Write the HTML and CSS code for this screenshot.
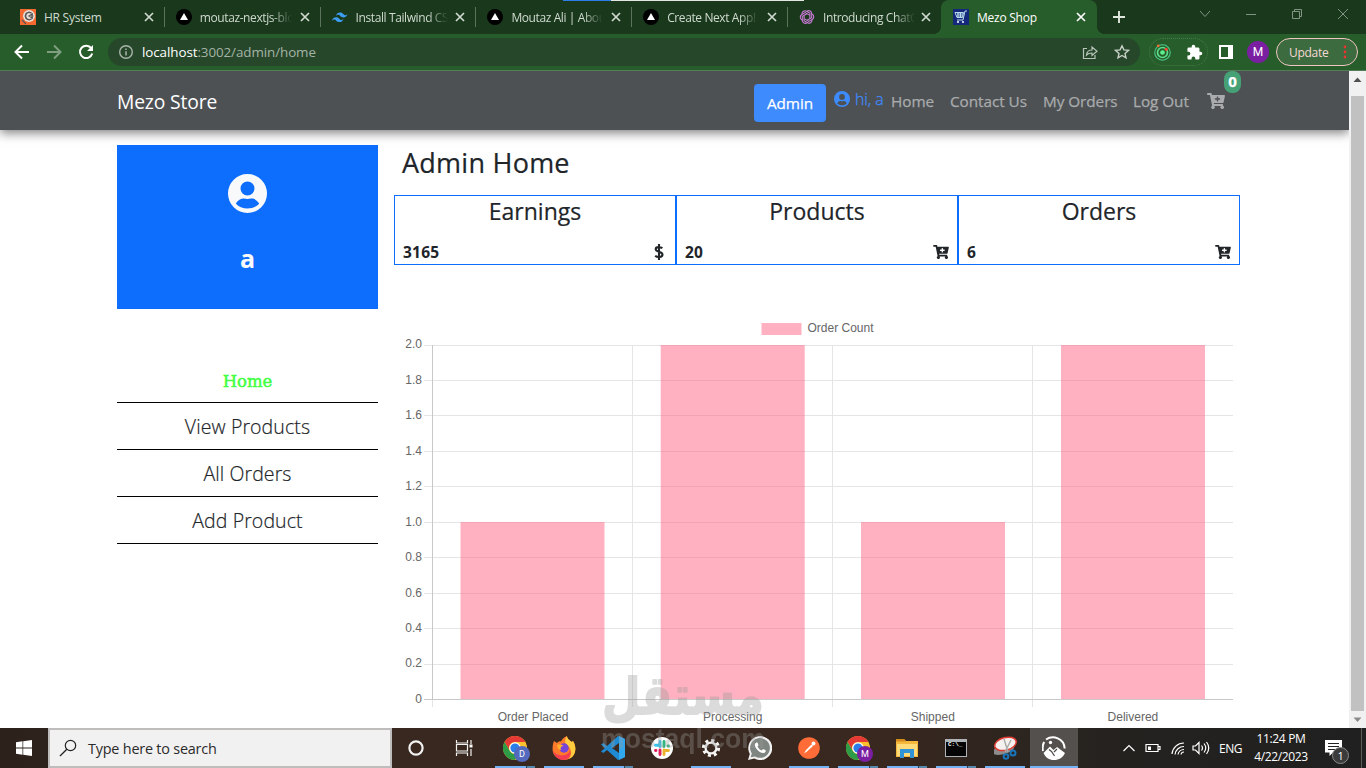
FILE: index.html
```html
<!DOCTYPE html>
<html lang="en">

<head>
    <meta charset="UTF-8">
    <meta name="viewport" content="width=device-width, initial-scale=1.0">
    <title>Mezo Shop</title>
    <link rel="stylesheet" href="styles.css">
</head>

<body>
    <!-- shared icons -->
    <svg class="sprite" width="0" height="0">
        <symbol id="close" viewBox="0 0 12 12"><path d="M2 2l8 8M10 2l-8 8" fill="none" stroke="currentColor" stroke-width="1.7"/></symbol>
        <symbol id="vercel" viewBox="0 0 16 16"><circle cx="8" cy="8" r="8" fill="#000"/><path d="M8 4l4 7H4z" fill="#fff"/></symbol>
        <symbol id="user" viewBox="0 0 24 24"><path fill="currentColor" fill-rule="evenodd" d="M12 0a12 12 0 1 0 0 24 12 12 0 0 0 0-24zm0 4.600a4.300 4.300 0 1 1 0 8.600 4.300 4.300 0 0 1 0-8.600zM4.800 18.200c1.500-2.300 3.200-3.200 5-3.100 1.500.4 2.900.4 4.400 0 1.800-.1 3.500.8 5 3.100-3.300 4.100-11.100 4.100-14.400 0z"/></symbol>
        <symbol id="cart" viewBox="0 0 576 512"><path fill="currentColor" fill-rule="evenodd" d="M505 319H218l6 33h269c15 0 27 14 23 29l-5 25a56 56 0 1 1-64 10H231a56 56 0 1 1-67-9L93 64H24C11 64 0 53 0 40V24C0 11 11 0 24 0h102c11 0 21 8 23 19l9 45h394c15 0 27 14 23 29l-47 208c-2 11-12 18-23 18zM408 168h-48v-40c0-9-7-16-16-16h-16c-9 0-16 7-16 16v40h-48c-9 0-16 7-16 16v16c0 9 7 16 16 16h48v40c0 9 7 16 16 16h16c9 0 16-7 16-16v-40h48c9 0 16-7 16-16v-16c0-9-7-16-16-16z"/></symbol>
        <symbol id="chrome" viewBox="0 0 24 24">
            <circle cx="12" cy="12" r="12" fill="#fbc02d"/>
            <path d="M1.6 6A12 12 0 0 1 22.4 6H12a6 6 0 0 0-5.2 9z" fill="#e53935"/>
            <path d="M1.6 6A12 12 0 0 0 12 24l5.2-9a6 6 0 0 1-10.4 0z" fill="#2e9b47"/>
            <circle cx="12" cy="12" r="5.8" fill="#fff"/><circle cx="12" cy="12" r="4.6" fill="#2b7de9"/>
        </symbol>
    </svg>

    <header class="browser">
        <div class="strip-accent"><span></span></div>
        <div class="tab-strip">
            <div class="tab">
                <svg class="favicon" viewBox="0 0 16 16"><rect width="16" height="16" fill="#f4692f"/><circle cx="9" cy="7" r="6" fill="#e9ddd5"/><circle cx="9" cy="7" r="4" fill="none" stroke="#777" stroke-width="1"/><path d="M11 4a3.500 3.500 0 1 0 0 6M9 7l3-2v4zM2 11l4 4" stroke="#555" fill="none" stroke-width="1.2"/></svg>
                <span class="tab-title">HR System</span><svg class="tab-close"><use href="#close"/></svg>
            </div>
            <div class="tab fade">
                <svg class="favicon"><use href="#vercel"/></svg>
                <span class="tab-title">moutaz-nextjs-blo</span><svg class="tab-close"><use href="#close"/></svg>
            </div>
            <div class="tab fade">
                <svg class="favicon" viewBox="0 0 16 16"><path d="M4 7c.6-2.300 2-3.400 4-3.400 3 0 3.300 2.200 4.800 2.600 1 .2 1.900-.2 2.700-1.200-.6 2.300-2 3.400-4 3.400-3 0-3.300-2.200-4.800-2.600C5.700 5.500 4.800 6 4 7zM0 11.700c.6-2.300 2-3.400 4-3.400 3 0 3.300 2.200 4.800 2.600 1 .2 1.900-.2 2.700-1.200-.6 2.300-2 3.400-4 3.400-3 0-3.300-2.200-4.800-2.600-1-.2-1.900.2-2.700 1.200z" fill="#3d9df2"/></svg>
                <span class="tab-title">Install Tailwind CS</span><svg class="tab-close"><use href="#close"/></svg>
            </div>
            <div class="tab fade">
                <svg class="favicon"><use href="#vercel"/></svg>
                <span class="tab-title">Moutaz Ali | Abou</span><svg class="tab-close"><use href="#close"/></svg>
            </div>
            <div class="tab fade">
                <svg class="favicon"><use href="#vercel"/></svg>
                <span class="tab-title">Create Next App!</span><svg class="tab-close"><use href="#close"/></svg>
            </div>
            <div class="tab fade last">
                <svg class="favicon" viewBox="0 0 16 16" fill="none" stroke="#c77ad4" stroke-width="1.1"><path id="petal" d="M8 2.200a3 3 0 0 1 4.700 2.500v4L8 11.300"/><use href="#petal" transform="rotate(60 8 8)"/><use href="#petal" transform="rotate(120 8 8)"/><use href="#petal" transform="rotate(180 8 8)"/><use href="#petal" transform="rotate(240 8 8)"/><use href="#petal" transform="rotate(300 8 8)"/></svg>
                <span class="tab-title">Introducing ChatG</span><svg class="tab-close"><use href="#close"/></svg>
            </div>
            <div class="tab active">
                <svg class="favicon" viewBox="0 0 16 16"><rect width="16" height="16" fill="#14297c"/><path d="M2 3.500h8.500l-1 5H4zM14 2h-2l-2 9H4M4 5h6M4 7h6M5 3.500v5M7.500 3.500v5" fill="none" stroke="#b8dcec" stroke-width="1"/><circle cx="5" cy="13" r="1" fill="#fff"/><circle cx="10" cy="13" r="1" fill="#fff"/></svg>
                <span class="tab-title">Mezo Shop</span><svg class="tab-close"><use href="#close"/></svg>
            </div>
            <svg class="new-tab" viewBox="0 0 12 12"><path d="M6 0v12M0 6h12" stroke="#dfe8df" stroke-width="1.900"/></svg>
            <div class="window-buttons">
                <svg viewBox="0 0 12 12"><path d="M1 3l5 5.500L11 3"/></svg>
                <svg viewBox="0 0 12 12"><path d="M1 6.500h10"/></svg>
                <svg viewBox="0 0 12 12"><path d="M1.500 3.500h7v7h-7zM3.500 3.500v-2h7v7h-2"/></svg>
                <svg viewBox="0 0 12 12"><path d="M1 1l10 10M11 1L1 11"/></svg>
            </div>
        </div>

        <div class="toolbar">
            <svg class="nav-icon" viewBox="0 0 16 16"><path d="M15 8H2M8 1.500L1.500 8 8 14.500" fill="none" stroke="#fff" stroke-width="2"/></svg>
            <svg class="nav-icon" viewBox="0 0 16 16"><path d="M1 8h13M8 1.500L14.500 8 8 14.500" fill="none" stroke="#7f9f81" stroke-width="2"/></svg>
            <svg class="nav-icon" viewBox="0 0 16 16"><path d="M13.300 4.300A6.200 6.200 0 1 0 14.200 9.500" fill="none" stroke="#fff" stroke-width="2"/><path d="M15 1v6H9z" fill="#fff"/></svg>
            <div class="omnibox">
                <svg class="info" viewBox="0 0 16 16"><circle cx="8" cy="8" r="6.300" fill="none" stroke="#aab6ab" stroke-width="1.400"/><path d="M8 7.200V11.500M8 4.400V6" stroke="#aab6ab" stroke-width="1.500"/></svg>
                <span class="url"><b>localhost</b>:3002/admin/home</span>
                <svg class="share" viewBox="0 0 16 16" fill="none" stroke="#b8c4b9" stroke-width="1.200"><path d="M5 4.500H1.500v10h11.500V11"/><path d="M4.500 11c.3-3 2.400-5 5.500-5V3l5 4.300L10 11.500V9C7.500 9 5.800 9.500 4.500 11z"/></svg>
                <svg class="star" viewBox="0 0 16 16"><path d="M8 1.800l1.900 4.100 4.500.5-3.400 3 1 4.400L8 11.500l-4 2.300 1-4.400-3.400-3 4.500-.5z" fill="none" stroke="#c9d2c9" stroke-width="1.400"/></svg>
            </div>
            <div class="extensions">
                <svg viewBox="0 0 16 16"><circle cx="8" cy="8" r="7.300" fill="none" stroke="#4ccb8c"/><circle cx="8" cy="8" r="4.700" fill="none" stroke="#5de08e" stroke-width="1.500"/><circle cx="8" cy="8" r="2.200" fill="#5df08e"/><circle cx="4" cy="1.700" r="1.300" fill="#f26a35"/><circle cx="11.500" cy="5" r="1.500" fill="#f2452e"/></svg>
                <svg viewBox="0 0 24 24"><path fill="#fff" d="M20.500 11H19V7c0-1.100-.9-2-2-2h-4V3.500a2.500 2.500 0 0 0-5 0V5H4a2 2 0 0 0-2 2v3.800h1.500a2.700 2.700 0 0 1 0 5.400H2V20c0 1.100.9 2 2 2h3.800v-1.500a2.700 2.700 0 0 1 5.400 0V22H17a2 2 0 0 0 2-2v-4h1.500a2.500 2.500 0 0 0 0-5z"/></svg>
            </div>
            <svg class="side-panel" viewBox="0 0 14 14"><path d="M1 1h12v12H1z" fill="none" stroke="#fff" stroke-width="2"/><path d="M9 1h4v12H9z" fill="#fff"/></svg>
            <span class="profile">M</span>
            <div class="update">Update<svg viewBox="0 0 4 14"><circle cx="2" cy="2" r="1.400"/><circle cx="2" cy="7" r="1.400"/><circle cx="2" cy="12" r="1.400"/></svg></div>
        </div>
    </header>

    <div class="viewport">
        <div class="page">
            <nav class="navbar">
                <a class="brand" href="#">Mezo Store</a>
                <div class="nav-links">
                    <a class="btn-admin" href="#">Admin</a>
                    <span class="greeting"><svg><use href="#user"/></svg>hi, a</span>
                    <a class="link-home" href="#">Home</a>
                    <a class="link-contact" href="#">Contact Us</a>
                    <a class="link-orders" href="#">My Orders</a>
                    <a class="link-logout" href="#">Log Out</a>
                    <a class="cart" href="#"><svg><use href="#cart"/></svg><span class="cart-count">0</span></a>
                </div>
            </nav>

            <div class="container">
                <aside class="sidebar">
                    <div class="profile-card">
                        <svg><use href="#user"/></svg>
                        <h3>a</h3>
                    </div>
                    <ul class="menu">
                        <li class="current">Home</li>
                        <li>View Products</li>
                        <li>All Orders</li>
                        <li>Add Product</li>
                    </ul>
                </aside>

                <main class="content">
                    <h1>Admin Home</h1>
                    <div class="cards">
                        <div class="card">
                            <h2>Earnings</h2>
                            <div class="card-row"><span>3165</span><svg class="dollar" viewBox="0 0 10 16"><path d="M5 0v16M8.300 4.300C7 2.900 1.700 2.300 1.700 5.200 1.700 8.200 8.500 7.200 8.500 10.500c0 3.300-5.500 3-7.300 1.300" fill="none" stroke="currentColor" stroke-width="2.100"/></svg></div>
                        </div>
                        <div class="card">
                            <h2>Products</h2>
                            <div class="card-row"><span>20</span><svg class="cart-icon"><use href="#cart"/></svg></div>
                        </div>
                        <div class="card">
                            <h2>Orders</h2>
                            <div class="card-row"><span>6</span><svg class="cart-icon"><use href="#cart"/></svg></div>
                        </div>
                    </div>

                    <svg class="chart" viewBox="0 0 846 413" width="846" height="413">
                        <path class="grid" d="M30 30.500h809M30 65.500h809M30 100.500h809M30 136.500h809M30 171.500h809M30 207.500h809M30 242.500h809M30 278.500h809M30 313.500h809M30 349.500h809M238.500 30v362M438.500 30v362M638.500 30v362M38.500 385v7"/>
                        <path class="axis" d="M38.500 30v355M30 384.500h809"/>
                        <g class="bars">
                            <rect x="66.500" y="207" width="144" height="177"/>
                            <rect x="266.700" y="30" width="144" height="354"/>
                            <rect x="467" y="207" width="144" height="177"/>
                            <rect x="667" y="30" width="144" height="354"/>
                            <rect x="367.500" y="8" width="40" height="12"/>
                        </g>
                        <text x="413.500" y="17">Order Count</text>
                        <g class="ticks">
                            <text x="28" y="33">2.0</text>
                            <text x="28" y="69">1.8</text>
                            <text x="28" y="104">1.6</text>
                            <text x="28" y="140">1.4</text>
                            <text x="28" y="175">1.2</text>
                            <text x="28" y="211">1.0</text>
                            <text x="28" y="246">0.8</text>
                            <text x="28" y="282">0.6</text>
                            <text x="28" y="317">0.4</text>
                            <text x="28" y="352">0.2</text>
                            <text x="28" y="388">0</text>
                        </g>
                        <g class="labels">
                            <text x="139" y="406">Order Placed</text>
                            <text x="338.700" y="406">Processing</text>
                            <text x="538.800" y="406">Shipped</text>
                            <text x="738.900" y="406">Delivered</text>
                        </g>
                    </svg>
                </main>
            </div>
        </div>
        <div class="scrollbar">
            <svg viewBox="0 0 17 17"><path d="M4.500 11h8l-4-4.500z" fill="#505050"/></svg>
            <div class="thumb"></div>
            <svg viewBox="0 0 17 17"><path d="M4.500 6.500h8l-4 4.500z" fill="#8b8b8b"/></svg>
        </div>
    </div>

    <footer class="taskbar">
        <div class="start"><svg viewBox="0 0 16 16" width="16" height="16"><path fill="#fff" d="M0 2.300L6.500 1.300V7.600H0zM7.200 1.200L16 0V7.600H7.200zM0 8.400h6.500v6.300L0 13.700zM7.200 8.400H16V16l-8.800-1.200z"/></svg></div>
        <div class="search">
            <svg viewBox="0 0 18 18" width="18" height="18"><circle cx="11.500" cy="6.500" r="5.200" fill="none" stroke="#222" stroke-width="1.200"/><path d="M7.800 10.200L1 17" stroke="#222" stroke-width="1.300"/></svg>
            <span>Type here to search</span>
        </div>
        <div class="apps">
            <div class="app first"><svg viewBox="0 0 24 24"><circle cx="12" cy="12" r="6.600" fill="none" stroke="#f2f2f2" stroke-width="2.200"/></svg></div>
            <div class="app second"><svg viewBox="0 0 24 24"><path d="M4.500 4v3h11V4M4.500 20v-3h11v3M4.500 8.500h11v6.500h-11zM19 4v4M19 13v7" fill="none" stroke="#f2f2f2" stroke-width="1.200"/><path d="M17.500 8.500h3v3h-3z" fill="#fff"/></svg></div>
            <div class="app open many"><svg><use href="#chrome"/></svg><span class="who blue">D</span></div>
            <div class="app open"><svg viewBox="0 0 24 24"><path d="M2 5l3 2c1-1.200 3-2 4-1.500 1-2.500 3-4.500 6-5.500 0 3 3 4 4.500 6L21 5c2 3 3 7 2 11-1.500 5-6 8-11 8S1.500 20.500.7 15C.3 11 1 7 2 5z" fill="#ff7a2a"/><path d="M15 0c0 3 3 4 4.500 6L21 5c2 3 3 7 2 11-1 4-4 6-6 7 4-6 2-11-2-14-3-2-2-6 0-9z" fill="#ffcd3d"/><path d="M1 14c2 5 9 7 14 4 2-1 3-2 3-4 2 6-2 10-7 10C6 24 1.500 19 1 14z" fill="#f43d50"/><circle cx="12" cy="12" r="4.700" fill="#7545da"/><path d="M5 9c3-1 5 0 7 1-3 0-4 2-3 4-2 0-4-2-4-5z" fill="#ffb02e"/></svg></div>
            <div class="app open many"><svg viewBox="0 0 24 24"><path d="M17 0l7 3v18l-7 3L6 14l-3.600 3L0 15.500 4 12 0 8.500 2.400 7 6 10zM18 7l-7 5 7 5z" fill="#1f8ad2" fill-rule="evenodd"/><path d="M18 0l6 3v18l-6 3z" fill="#31a7f0"/></svg></div>
            <div class="app"><svg viewBox="0 0 24 24"><circle cx="12" cy="12" r="11" fill="#fff"/><g fill="none" stroke-width="2.900" stroke-linecap="round"><path d="M10 5.500v5M5.500 9.300H10" stroke="#36c5f0"/><path d="M14 5.500v5M18.500 10h-.5" stroke="#2eb67d"/><path d="M14 14v4.500M14 14.500h4.500" stroke="#ecb22e"/><path d="M10 14v4.500M5.500 14.500h.5" stroke="#e01e5a"/></g></svg></div>
            <div class="app open"><svg viewBox="0 0 24 24"><circle cx="12" cy="12" r="5.400" fill="none" stroke="#f4f4f4" stroke-width="2.300"/><circle cx="12" cy="12" r="7.600" fill="none" stroke="#f4f4f4" stroke-width="3" stroke-dasharray="3 2.970"/></svg></div>
            <div class="app"><svg viewBox="0 0 24 24"><path d="M0 24l1.800-6A12 12 0 1 1 6.300 22.500z" fill="#f2f2f2"/><path d="M2.700 21.300l1.100-3.800A9.900 9.900 0 1 1 7 20.500z" fill="#7f8581"/><path d="M8.500 6.500c-3 1.500-1.500 5 1 7.500s6.200 4.600 8 1.700c.3-.9.3-1.400-.3-1.700l-2-.9-1.700 1.500c-2-1-3-2-4-4l1-1.300-.8-2.300c-.3-.5-.7-.6-1.200-.5z" fill="#fff"/></svg></div>
            <div class="app open"><svg viewBox="0 0 24 24"><circle cx="12" cy="12" r="10.800" fill="#ff6c37"/><path d="M7 17.500l2-3.500 5.500-5.500 1.500 1.500-6 5.500z" fill="#fff"/><circle cx="16.500" cy="7.500" r="1.900" fill="#fff"/></svg></div>
            <div class="app open many"><svg><use href="#chrome"/></svg><span class="who purple">M</span></div>
            <div class="app open many"><svg viewBox="0 0 24 24"><path d="M1 3h8l2 2h12v16H1z" fill="#f5b83d"/><path d="M1 3h8l2 2.500H1z" fill="#d48c1c"/><path d="M2 8h20v12H2z" fill="#ffdc79"/><path d="M5 22v-9h14v9h-4v-5H9v5z" fill="#2f93d5"/></svg></div>
            <div class="app open many"><svg viewBox="0 0 24 24"><path d="M1 3h22v18H1z" fill="#aeb4b8"/><path d="M2 6h20v14H2z" fill="#050505"/></svg><span class="prompt">C:\_</span></div>
            <div class="app open"><svg viewBox="0 0 24 24"><path d="M1 14c2-7 18-7 20-3 1 5-16 10-20 7z" fill="#8c8c8c"/><ellipse cx="12.500" cy="8" rx="11" ry="6.300" fill="#f4f1ef" stroke="#df3c34" stroke-width="1.500" transform="rotate(-15 12 8)"/><path d="M11 3l4 13M18 4l-6 12" stroke="#aaa" stroke-width="1.400"/><circle cx="13" cy="20.500" r="2.300" fill="none" stroke="#1976bd" stroke-width="2"/><circle cx="20" cy="17" r="2.500" fill="none" stroke="#1976bd" stroke-width="2"/></svg></div>
            <div class="app open selected"><svg viewBox="0 0 24 24"><path d="M4 3.500C11-1 22 2 22.700 12.500M2.200 6C.5 9 .3 12 1 15" fill="none" stroke="#fff" stroke-width="2"/><path d="M1.500 17L8 10.500l3.500 3.500 3.500-3 8 6c-2 4.500-6 7-11 7s-8.500-2.500-10.500-7z" fill="#fff"/><circle cx="8.500" cy="6.500" r="1.700" fill="#fff"/><path d="M7 13.500l2.500 2 3 4.500M15 13l-3 3" fill="none" stroke="#514d4a" stroke-width="1.300"/></svg></div>
        </div>
        <div class="tray">
            <svg viewBox="0 0 16 16"><path d="M2.500 11L8 5.500l5.500 5.500"/></svg>
            <svg class="battery" viewBox="0 0 16 16"><path d="M1 4.500h12v7H1zM13.500 6.500H15v3h-1.500"/><path d="M3 6.500h3v3.500H3z" fill="#fff" stroke="none"/></svg>
            <svg class="wifi" viewBox="0 0 16 16"><path d="M2 14A12 12 0 0 1 14 3M5 14.500A9 9 0 0 1 14 6.500M8 14.500a6 6 0 0 1 6-5M11 14.500a3 3 0 0 1 3-2.500"/></svg>
            <svg class="volume" viewBox="0 0 18 16"><path d="M1 6h2.500L7 2.500v11L3.500 10H1zM9.500 5.500q2 2.500 0 5M12 3.500q3.500 4.500 0 9M14.500 2q4.500 6 0 12"/></svg>
            <span class="lang">ENG</span>
            <div class="clock"><span>11:24 PM</span><span>4/22/2023</span></div>
            <div class="notify"><svg viewBox="0 0 17 16"><path d="M0 0h17v12.500H8L4.500 16v-3.500H0z" fill="#fff"/><path d="M3 3.500h11M3 6.500h11M3 9.500h7" stroke="#222" stroke-width="1.200"/></svg><span>1</span></div>
            <div class="show-desktop"></div>
        </div>
    </footer>

    <svg class="watermark" width="170" height="90" viewBox="0 0 170 90">
        <text class="wm-arabic" x="84" y="32" transform="scale(1 1.220)" textLength="162" lengthAdjust="spacingAndGlyphs">مستقل</text>
        <text class="wm-latin" x="84" y="73" textLength="164" lengthAdjust="spacingAndGlyphs">mostaql.com</text>
    </svg>
</body>

</html>
```
FILE: styles.css
```css
:root {
    --frame: #1a391c;
    --toolbar: #275d2b;
    --primary: #0d6efd;
    --text: #212529;
    --underline: #73b3f5;
}

* {
    margin: 0;
    padding: 0;
    box-sizing: border-box;
}

body {
    width: 1366px;
    height: 768px;
    display: flex;
    flex-direction: column;
    overflow: hidden;
    background: #fff;
    color: var(--text);
    font-family: "Open Sans", "Noto Sans", sans-serif;
}

a {
    color: inherit;
    text-decoration: none;
}

svg {
    display: block;
    flex-shrink: 0;
}

.sprite {
    position: absolute;
}

/* Browser frame */
.browser {
    height: 71px;
    border-bottom: 1px solid #527d55;
    background: var(--toolbar);
}

.strip-accent {
    position: absolute;
    top: 0;
    left: 563px;
    width: 241px;
    height: 1px;
    background: #e4e6e4;
}

.strip-accent span {
    display: block;
    width: 48px;
    height: 1px;
    background: #2b7de9;
}

.tab-strip {
    height: 34px;
    padding-left: 9px;
    display: flex;
    background: var(--frame);
}

.tab {
    width: 155.8px;
    height: 34px;
    padding: 0 10px 0 11px;
    display: flex;
    align-items: center;
    color: #cfd9cf;
    font-size: 12px;
    background: linear-gradient(#5b735c, #5b735c) right 7px / 1px 20px no-repeat;
}

.tab.last {
    width: 153px;
    padding-right: 9px;
    background: none;
}

.favicon {
    width: 16px;
    height: 16px;
    margin-right: 8px;
}

.tab-title {
    flex: 1;
    white-space: nowrap;
    letter-spacing: -0.25px;
}

.fade .tab-title {
    width: 92px;
    flex: none;
    letter-spacing: -0.4px;
    -webkit-mask-image: linear-gradient(90deg, #000 78%, transparent);
    mask-image: linear-gradient(90deg, #000 78%, transparent);
}

.tab-close {
    width: 12px;
    height: 12px;
    margin-left: auto;
}

.tab.active {
    position: relative;
    width: 156px;
    padding-left: 12px;
    background: var(--toolbar);
    border-radius: 8px 8px 0 0;
    color: #fff;
}

.tab.active::before,
.tab.active::after {
    content: "";
    position: absolute;
    bottom: 0;
    width: 8px;
    height: 8px;
}

.tab.active::before {
    left: -8px;
    background: radial-gradient(circle at 0 0, transparent 8px, var(--toolbar) 8px);
}

.tab.active::after {
    right: -8px;
    background: radial-gradient(circle at 100% 0, transparent 8px, var(--toolbar) 8px);
}

.new-tab {
    width: 12px;
    height: 12px;
    margin: 11px 0 0 16px;
}

.window-buttons {
    margin: 8px 17px 0 auto;
    display: flex;
    gap: 34px;
}

.window-buttons svg {
    width: 12px;
    height: 12px;
    fill: none;
    stroke: #829483;
}

.toolbar {
    height: 36px;
    padding: 0 8px 0 14px;
    display: flex;
    align-items: center;
}

.nav-icon {
    width: 16px;
    height: 16px;
    margin-right: 16px;
}

.omnibox {
    width: 1032px;
    height: 28px;
    margin-left: -2px;
    padding: 0 10px;
    display: flex;
    align-items: center;
    border-radius: 14px;
    background: #26472a;
}

.info,
.share,
.star {
    width: 16px;
    height: 16px;
}

.url {
    margin: 0 auto 0 8px;
    font-size: 13.4px;
    color: #a5b3a6;
    letter-spacing: -0.08px;
}

.url b {
    color: #fff;
    font-weight: 400;
}

.share {
    margin-right: 16px;
}

.extensions {
    width: 59px;
    height: 28px;
    margin-left: 9px;
    padding: 0 4px;
    display: flex;
    align-items: center;
    justify-content: space-between;
    border: 1px dotted #477a4a;
    border-radius: 14px;
}

.extensions svg {
    width: 17px;
    height: 17px;
}

.side-panel {
    width: 14px;
    height: 14px;
    margin-left: 11px;
}

.profile {
    width: 22px;
    height: 22px;
    margin-left: 14px;
    border-radius: 50%;
    background: #7b1fa2;
    color: #fff;
    font: 12px/22px Roboto, sans-serif;
    text-align: center;
}

.update {
    width: 82px;
    height: 28px;
    margin-left: 7px;
    padding-left: 12px;
    display: flex;
    align-items: center;
    gap: 15px;
    border: 1px solid #efc5c1;
    border-radius: 14px;
    background: #3d6b40;
    color: #f5d9d5;
    font-size: 12px;
    letter-spacing: -0.3px;
}

.update svg {
    width: 4px;
    height: 14px;
    fill: #e9352e;
}

/* Page area */
.viewport {
    height: 657px;
    display: flex;
}

.page {
    width: 1349px;
    overflow: hidden;
}

.scrollbar {
    width: 17px;
    display: flex;
    flex-direction: column;
    background: #f1f1f1;
}

.scrollbar svg {
    width: 17px;
    height: 17px;
}

.thumb {
    width: 13px;
    height: 615px;
    margin: 8px 2px 0;
    background: #c1c1c1;
}

.navbar {
    height: 59px;
    padding: 0 117px;
    display: flex;
    justify-content: space-between;
    background: #4d5154;
    box-shadow: 0 3px 10px rgba(0, 0, 0, 0.5);
    color: #a9abac;
    font-size: 15.3px;
    white-space: nowrap;
}

.brand {
    margin-top: 18px;
    color: #fff;
    font-size: 19.3px;
    line-height: 26px;
    letter-spacing: -0.15px;
}

.nav-links {
    width: 478px;
    display: flex;
    line-height: 24px;
    letter-spacing: -0.05px;
    -webkit-text-stroke: 0.25px;
}

.nav-links > a {
    margin-top: 18px;
}

.nav-links > .btn-admin {
    width: 72px;
    height: 38px;
    margin-top: 13px;
    border-radius: 4px;
    background: #3d8bfd;
    color: #fff;
    font-weight: 500;
    line-height: 39px;
    text-align: center;
}

.greeting {
    width: 57px;
    margin: 16px 0 0 8px;
    display: flex;
    color: #3d8bfd;
    font-size: 15.8px;
    font-weight: 300;
}

.greeting svg {
    width: 16px;
    height: 16px;
    margin: 4px 5px 0 0;
}

.link-home {
    width: 59px;
}

.link-contact {
    width: 93px;
}

.link-orders {
    width: 90px;
}

.link-logout {
    width: 74px;
}

.cart {
    position: relative;
}

.cart svg {
    width: 18px;
    height: 16px;
    margin-top: 4px;
}

.cart-count {
    position: absolute;
    left: 17px;
    top: -18px;
    width: 17px;
    height: 22px;
    border-radius: 8px;
    background: #47a177;
    color: #fff;
    font-size: 15px;
    font-weight: 700;
    line-height: 21px;
    text-align: center;
}

.container {
    padding: 15px 109px 0 117px;
    display: flex;
    gap: 16px;
}

.sidebar {
    width: 261px;
}

.profile-card {
    height: 164px;
    padding-top: 28.5px;
    background: var(--primary);
    color: #f8f9fa;
    text-align: center;
}

.profile-card svg {
    width: 39px;
    height: 39px;
    margin: 0 auto;
}

.profile-card h3 {
    margin-top: 27.5px;
    font-size: 25px;
    font-weight: 700;
    line-height: 36px;
}

.menu {
    margin-top: 47px;
    list-style: none;
    text-align: center;
}

.menu li {
    height: 47px;
    padding-top: 8px;
    border-bottom: 1px solid #000;
    font-size: 19.5px;
    font-weight: 300;
    line-height: 32px;
    letter-spacing: 0.1px;
    -webkit-text-stroke: 0.2px;
}

.menu .current {
    padding-top: 10px;
    color: #43ff43;
    font-family: "DejaVu Serif", serif;
    font-size: 16.5px;
    font-weight: 400;
    letter-spacing: 0;
    -webkit-text-stroke: 0.5px;
}

.content {
    width: 846px;
}

.content h1 {
    height: 50px;
    padding-left: 8px;
    font-size: 27px;
    font-weight: 500;
    line-height: 35px;
    letter-spacing: 0.25px;
    -webkit-text-stroke: 0.2px;
}

.cards {
    display: flex;
}

.card {
    width: 282px;
    height: 70px;
    border: 1px solid var(--primary);
}

.card h2 {
    font-size: 23px;
    font-weight: 500;
    line-height: 30px;
    text-align: center;
    -webkit-text-stroke: 0.2px;
}

.card-row {
    height: 24px;
    margin-top: 14px;
    padding: 0 8px;
    display: flex;
    align-items: center;
    justify-content: space-between;
    font-size: 15.5px;
    font-weight: 700;
    letter-spacing: 0.2px;
}

.dollar {
    width: 10px;
    height: 16px;
    margin-right: 3px;
}

.cart-icon {
    width: 16px;
    height: 14px;
}

.chart {
    margin-top: 50px;
    fill: #666;
    font: 12px "Liberation Sans", Arial, sans-serif;
}

.chart .grid {
    fill: none;
    stroke: #e5e5e5;
}

.chart .axis {
    fill: none;
    stroke: #c8c8c8;
}

.bars {
    fill: rgba(255, 99, 132, 0.5);
}

.ticks {
    text-anchor: end;
}

.labels {
    text-anchor: middle;
}

/* Taskbar */
.taskbar {
    height: 40px;
    display: flex;
    background: linear-gradient(90deg, #2c211b 0, #38281f 30%, #38281f 65%, #24221f 82%, #202020);
    color: #fff;
}

.start {
    width: 48px;
    padding: 12px 0 0 16px;
}

.search {
    width: 344px;
    padding-left: 9px;
    display: flex;
    align-items: center;
    border: 2px solid #bfbdbc;
    background: #f2f1f1;
    color: #2b2b2b;
    font-size: 14.4px;
    letter-spacing: -0.2px;
}

.search span {
    margin-left: 11px;
}

.apps {
    display: flex;
}

.app {
    position: relative;
    width: 49px;
    padding: 8px 0 0 12px;
}

.app.second {
    width: 50px;
    padding-left: 11px;
}

.app svg {
    width: 24px;
    height: 24px;
}

.app.open::after {
    content: "";
    position: absolute;
    left: 4px;
    bottom: 0;
    width: 40px;
    height: 2px;
    background: var(--underline);
}

.app.many::after {
    background: linear-gradient(90deg, var(--underline) 31px, #2d3c47 31px, #2d3c47 32px, #5789ac 32px);
}

.app.selected {
    width: 48px;
    background: #54504d;
}

.app.selected::after {
    left: 0;
    width: 48px;
}

.who {
    position: absolute;
    left: 23px;
    top: 18px;
    width: 16px;
    height: 16px;
    border-radius: 50%;
    font: 9px/16px Roboto, sans-serif;
    text-align: center;
}

.who.blue {
    background: #5269bd;
}

.who.purple {
    background: #7b1fa2;
}

.prompt {
    position: absolute;
    left: 16px;
    top: 13px;
    font: 700 6px "Liberation Mono", monospace;
}

.tray {
    flex: 1;
    padding-left: 43px;
    display: flex;
    align-items: center;
    font-size: 12px;
    letter-spacing: -0.45px;
}

.tray svg {
    width: 16px;
    height: 16px;
    fill: none;
    stroke: #fff;
    stroke-width: 1.2;
}

.tray .battery {
    margin-left: 8px;
}

.tray .wifi {
    margin-left: 9px;
}

.tray .volume {
    width: 18px;
    margin-left: 6px;
}

.lang {
    width: 24px;
    margin-left: 9px;
}

.clock {
    width: 70px;
    margin-left: 3px;
    display: flex;
    flex-direction: column;
    line-height: 18px;
    text-align: center;
    letter-spacing: -0.35px;
}

.notify {
    position: relative;
    margin-left: 9px;
}

.notify svg {
    width: 17px;
    stroke: none;
}

.notify span {
    position: absolute;
    left: 7px;
    top: 7px;
    width: 17px;
    height: 17px;
    border: 1px solid #8b8b8b;
    border-radius: 50%;
    background: #3b3b3b;
    font-size: 11px;
    line-height: 15px;
    text-align: center;
}

.show-desktop {
    width: 5px;
    height: 40px;
    margin-left: auto;
    border-left: 1px solid #5c5b5a;
}

.watermark {
    position: absolute;
    left: 599px;
    top: 675px;
    fill: #999;
    opacity: 0.35;
    text-anchor: middle;
    pointer-events: none;
}

.wm-arabic {
    font: 700 44px "DejaVu Sans", sans-serif;
    stroke: #999;
    stroke-width: 1.5px;
    stroke-linejoin: round;
}

.wm-latin {
    font: 700 27px "Liberation Sans", sans-serif;
}
```
